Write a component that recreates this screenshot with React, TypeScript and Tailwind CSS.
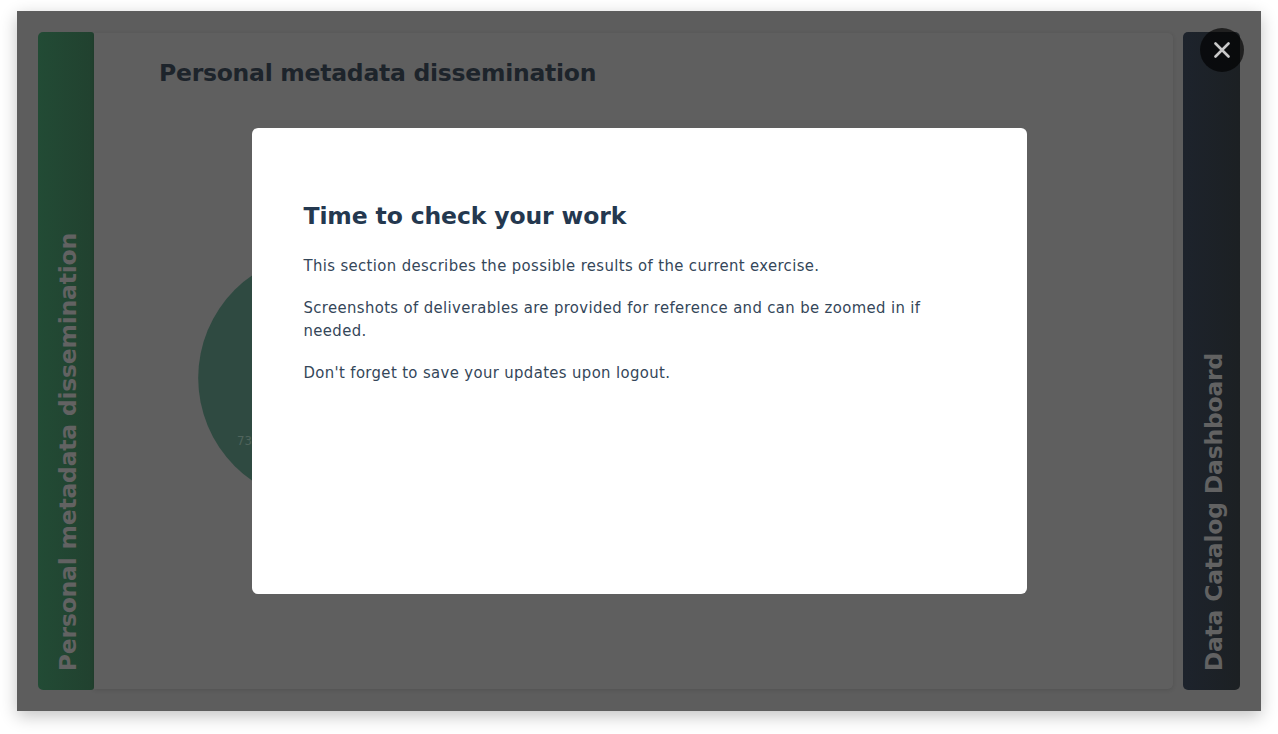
import React from "react";

const headingFont = "font-['DejaVu_Sans',Verdana,sans-serif] font-bold";

function Spine({ title, className }: { title: string; className: string }) {
  return (
    <div className={`flex items-end ${className}`}>
      <span
        className={`${headingFont} rotate-180 whitespace-nowrap text-[23.5px] leading-[30px] tracking-[-0.23px] text-[#626262] [writing-mode:vertical-rl]`}
      >
        {title}
      </span>
    </div>
  );
}

function PieChart() {
  return (
    <svg className="ml-[104px] mt-[165px] block" width="250" height="250" viewBox="0 0 250 250">
      <circle cx="125" cy="125" r="124.8" fill="#2f4a41" />
      <text x="39" y="192" fontSize="13" fill="#50645c" fontFamily="DejaVu Sans Condensed, DejaVu Sans, sans-serif">
        73%
      </text>
    </svg>
  );
}

export default function App() {
  return (
    <div className="h-[734px] w-[1278px] overflow-hidden bg-white pl-[17px] pt-[11px]">
      <main className="relative flex h-[700px] w-[1244px] bg-[#5d5d5d] pl-[21px] pt-[21px] shadow-[0_5px_16px_rgba(0,0,0,0.24)]">
        <Spine
          title="Personal metadata dissemination"
          className="h-[658px] w-[56px] rounded-l-[5px] rounded-r-[3px] bg-linear-to-r from-[#224b35] to-[#21412f] pb-[19px] pl-[15px]"
        />
        <section className="mt-px h-[656px] w-[1079px] rounded-r-[5px] bg-[#5f5f5f] shadow-[0_1px_4px_rgba(0,0,0,0.12)]">
          <h1
            className={`${headingFont} pl-[65px] pt-[25px] text-[23.5px] leading-[30px] tracking-[-0.26px] text-[#1d242b]`}
          >
            Personal metadata dissemination
          </h1>
          <PieChart />
        </section>
        <Spine
          title="Data Catalog Dashboard"
          className="ml-[10px] h-[658px] w-[57px] rounded-[5px] bg-linear-to-r from-[#1d232c] to-[#1c2023] pb-[19px] pl-[16px]"
        />

        <div className="absolute inset-0 flex items-start justify-center pt-[116.5px]">
          <div
            role="dialog"
            className="h-[466.5px] w-[775px] rounded-[6px] bg-white px-[52px] pt-[73px] text-[#24384f]"
          >
            <h2 className={`${headingFont} text-[23.5px] leading-[30px] tracking-[-0.13px]`}>
              Time to check your work
            </h2>
            <div className="mt-[23px] font-['DejaVu_Sans_Condensed','DejaVu_Sans',sans-serif] text-[16.5px] leading-[23px] tracking-[0.38px] text-[#344659]">
              <p>This section describes the possible results of the current exercise.</p>
              <p className="mt-[19px]">
                Screenshots of deliverables are provided for reference and can be zoomed in if
                <br />
                needed.
              </p>
              <p className="mt-[19px]">Don't forget to save your updates upon logout.</p>
            </div>
          </div>
        </div>

        <button
          aria-label="Close"
          className="absolute right-[17px] top-[17px] flex size-[44px] items-center justify-center rounded-full bg-black/65"
        >
          <svg width="16" height="16" viewBox="0 0 16 16" fill="none" stroke="#c9c9c9" strokeWidth="2.6" strokeLinecap="round">
            <path d="M1.5 1.5 14.5 14.5M14.5 1.5 1.5 14.5" />
          </svg>
        </button>
      </main>
    </div>
  );
}
